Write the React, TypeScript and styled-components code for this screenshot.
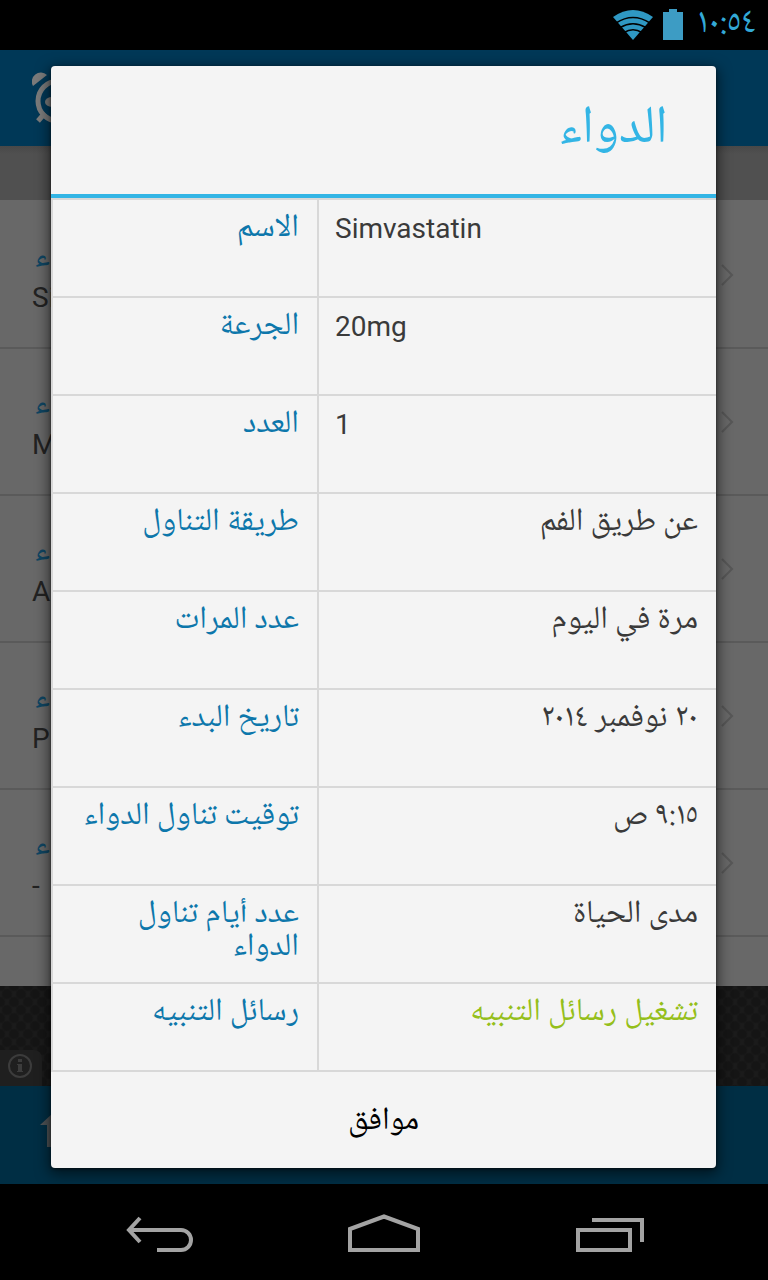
import React from "react";
import styled, { createGlobalStyle, css } from "styled-components";

const GlobalStyle = createGlobalStyle`
  * { box-sizing: border-box; }
  body { margin: 0; background: #000; }
  button { font: inherit; border: 0; padding: 0; background: none; cursor: pointer; }
  svg { display: block; }
`;

const arabic = css`
  font-family: "Noto Naskh Arabic UI", "Noto Naskh Arabic", "DejaVu Sans", sans-serif;
  font-size: 32px;
`;

const Screen = styled.div`
  min-height: 100vh;
  display: flex;
  flex-direction: column;
  background: #000;
  font-family: Roboto, sans-serif;
  font-size: 28px;
  line-height: 33px;
`;

const StatusBar = styled.header`
  height: 50px;
  display: flex;
  align-items: center;
  justify-content: flex-end;
  gap: 10px;
  padding-right: 12px;
  color: #33a9d6;
`;

const Clock = styled.time`
  ${arabic}
  margin-left: 4px;
  padding-bottom: 4px;
  font-size: 36px;
`;

const Stage = styled.div`
  position: relative;
  flex: 1;
  display: flex;
  flex-direction: column;
`;

const Page = styled.div`
  flex: 1;
  display: flex;
  flex-direction: column;
  overflow: hidden;
`;

const AppHeader = styled.div`
  height: 96px;
  display: flex;
  align-items: center;
  padding-left: 32px;
  background: #003857;
`;

const SubHeader = styled.div`
  height: 54px;
  background: linear-gradient(#484848, #505050 8px);
`;

const List = styled.ul`
  flex: 1;
  margin: 0;
  padding: 2px 0 0;
  list-style: none;
  background: #686868;
`;

const ListRow = styled.li`
  height: 147px;
  display: flex;
  align-items: center;
  justify-content: space-between;
  padding: 0 34px 0 32px;
  border-bottom: 2px solid #5a5a5a;
`;

const ListText = styled.div`
  display: flex;
  flex-direction: column;
  gap: 8px;
  padding-top: 4px;
  color: #222;
`;

const ListKind = styled.span`
  ${arabic}
  padding-left: 2px;
  font-size: 36px;
  color: #0f4562;
`;

const AdStrip = styled.div`
  height: 100px;
  display: flex;
  align-items: flex-end;
  background-color: #1b1b1b;
  background-image: radial-gradient(circle, #151515 4px, transparent 6px),
    radial-gradient(circle, #151515 4px, transparent 6px);
  background-size: 14px 16px;
  background-position: 0 0, 7px 8px;
`;

const AdInfo = styled.span`
  width: 42px;
  height: 36px;
  display: flex;
  align-items: center;
  padding: 0 0 4px 8px;
  border-top-right-radius: 8px;
  background: #1f1f1f;
`;

const BottomBar = styled.div`
  height: 98px;
  display: flex;
  align-items: center;
  padding: 0 0 8px 40px;
  background: #002e44;
`;

const Overlay = styled.div`
  position: absolute;
  inset: 0;
  padding: 16px 52px 16px 51px;
`;

const Dialog = styled.section`
  display: flex;
  flex-direction: column;
  border-radius: 4px;
  background: #f4f4f4;
  box-shadow: 0 4px 14px 2px rgba(0, 0, 0, 0.55), 0 1px 3px rgba(0, 0, 0, 0.5);
`;

const DialogTitle = styled.h1`
  ${arabic}
  height: 132px;
  margin: 0;
  padding: 33px 48px 0;
  border-bottom: 4px solid #33b5e5;
  color: #33b5e5;
  font-size: 53px;
  line-height: 60px;
  font-weight: 400;
`;

const Details = styled.table`
  width: 100%;
  table-layout: fixed;
  border-collapse: separate;
  border-spacing: 0;
  border-bottom: 2px solid #d8d8d8;
`;

const DetailRow = styled.tr`
  height: 98px;
  &:last-child { height: 88px; }
`;

const cell = css`
  border-top: 2px solid #d8d8d8;
  border-left: 2px solid #d8d8d8;
  vertical-align: top;
  font-weight: 400;
`;

const Label = styled.th`
  ${cell}
  ${arabic}
  width: 40%;
  padding: 11px 16px 0;
  text-align: right;
  color: #0d77ab;
`;

const Value = styled.td<{ $latin?: boolean; $on?: boolean }>`
  ${cell}
  ${(p) => !p.$latin && arabic}
  padding: ${(p) => (p.$latin ? "12px" : "11px")} 16px 0;
  text-align: ${(p) => (p.$latin ? "left" : "right")};
  color: ${(p) => (p.$on ? "#95bf1b" : "#3a3a3a")};
`;

const OkButton = styled.button`
  height: 96px;
  && { ${arabic} }
  color: #000;
`;

const NavBar = styled.nav`
  height: 96px;
  display: flex;
  justify-content: space-between;
  padding: 4px 124px 0;
`;

const NavButton = styled.button`
  display: flex;
  align-items: center;
  color: #a3a3a3;
`;

const items = ["Si", "M", "A", "P", "-"];

const details: { label: string; value: string; latin?: boolean; on?: boolean }[] = [
  { label: "الاسم", value: "Simvastatin", latin: true },
  { label: "الجرعة", value: "20mg", latin: true },
  { label: "العدد", value: "1", latin: true },
  { label: "طريقة التناول", value: "عن طريق الفم" },
  { label: "عدد المرات", value: "مرة في اليوم" },
  { label: "تاريخ البدء", value: "٢٠ نوفمبر ٢٠١٤" },
  { label: "توقيت تناول الدواء", value: "٩:١٥ ص" },
  { label: "عدد أيام تناول الدواء", value: "مدى الحياة" },
  { label: "رسائل التنبيه", value: "تشغيل رسائل التنبيه", on: true },
];

const Wifi = () => (
  <svg width="40" height="32" viewBox="0 0 40 32" aria-hidden="true">
    <path d="M0 8Q20 -6 40 8L20 31Z" fill="#2f98c3" />
    <g fill="none" stroke="#000" strokeWidth="1.5">
      <path d="M3 14Q20 3 37 14" />
      <path d="M7 18.500Q20 11 33 18.500" />
      <path d="M11 23.500Q20 18 29 23.500" />
    </g>
  </svg>
);

const Battery = () => (
  <svg width="20" height="32" viewBox="0 0 20 32" aria-hidden="true">
    <path d="M0 3H6V0H14V3H20V31H0Z" fill="#3d9cc4" />
  </svg>
);

const AlarmClock = () => (
  <svg width="52" height="52" viewBox="0 0 52 52" aria-hidden="true">
    <g fill="none" stroke="#7b7b7b" strokeWidth="5">
      <circle cx="26" cy="29" r="20" />
      <path d="M13 41L6 49M39 41L46 49" />
    </g>
    <path d="M1 14A9 9 0 0 1 15 3ZM51 14A9 9 0 0 0 37 3Z" fill="#7b7b7b" />
    <ellipse cx="20" cy="30" rx="7" ry="5" fill="#7b7b7b" />
  </svg>
);

const Chevron = () => (
  <svg width="14" height="22" viewBox="0 0 14 22" aria-hidden="true">
    <path d="M2 1L12 11L2 21" fill="none" stroke="#575757" strokeWidth="2" />
  </svg>
);

const InfoMark = () => (
  <svg width="24" height="24" viewBox="0 0 24 24" aria-hidden="true">
    <circle cx="12" cy="12" r="11" fill="none" stroke="#3c3c3c" strokeWidth="2" />
    <path d="M10 5H14V8H10ZM9 10H14V17H15V18H9V17H10V11H9Z" fill="#3c3c3c" />
  </svg>
);

const UpArrow = () => (
  <svg width="26" height="36" viewBox="0 0 26 36" aria-hidden="true">
    <path d="M13 0L26 12H19V34H7V12H0Z" fill="#4f5356" />
  </svg>
);

export default function App() {
  return (
    <Screen>
      <GlobalStyle />
      <StatusBar>
        <Wifi />
        <Battery />
        <Clock>١٠:٥٤</Clock>
      </StatusBar>
      <Stage>
        <Page>
          <AppHeader>
            <AlarmClock />
          </AppHeader>
          <SubHeader />
          <List>
            {items.map((name) => (
              <ListRow key={name}>
                <ListText>
                  <ListKind>ء</ListKind>
                  <span>{name}</span>
                </ListText>
                <Chevron />
              </ListRow>
            ))}
          </List>
          <AdStrip>
            <AdInfo>
              <InfoMark />
            </AdInfo>
          </AdStrip>
          <BottomBar>
            <UpArrow />
          </BottomBar>
        </Page>
        <Overlay>
          <Dialog role="dialog" aria-labelledby="dialog-title">
            <DialogTitle id="dialog-title" dir="rtl">الدواء</DialogTitle>
            <Details>
              <tbody>
                {details.map((d) => (
                  <DetailRow key={d.label}>
                    <Label scope="row" dir="rtl">{d.label}</Label>
                    <Value dir={d.latin ? "ltr" : "rtl"} $latin={d.latin} $on={d.on}>
                      {d.value}
                    </Value>
                  </DetailRow>
                ))}
              </tbody>
            </Details>
            <OkButton type="button">موافق</OkButton>
          </Dialog>
        </Overlay>
      </Stage>
      <NavBar>
        <NavButton type="button" aria-label="Back">
          <svg width="72" height="40" viewBox="0 0 72 40" fill="none" stroke="currentColor" strokeWidth="4">
            <path d="M5 16H57A10 10 0 0 1 57 36H33" />
            <path d="M16 4L5 16L16 28" />
          </svg>
        </NavButton>
        <NavButton type="button" aria-label="Home">
          <svg width="72" height="40" viewBox="0 0 72 40" fill="none" stroke="currentColor" strokeWidth="4">
            <path d="M2 15L36 2.500L70 15V36H2Z" />
          </svg>
        </NavButton>
        <NavButton type="button" aria-label="Recent apps">
          <svg width="72" height="40" viewBox="0 0 72 40" fill="none" stroke="currentColor" strokeWidth="4">
            <path d="M6 16H58V36H6ZM20 6H70V28" />
          </svg>
        </NavButton>
      </NavBar>
    </Screen>
  );
}
